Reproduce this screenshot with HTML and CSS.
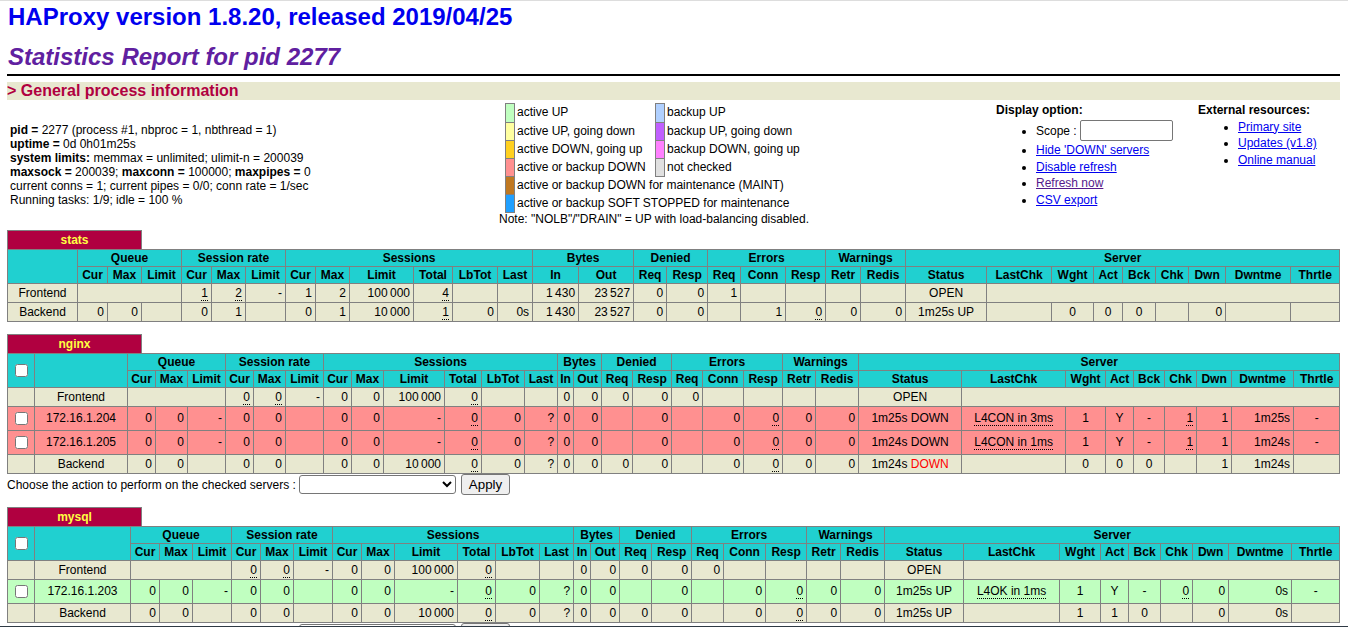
FILE: index.html
```html
<!DOCTYPE html>
<html lang="en">
<head>
<meta charset="utf-8">
<title>Statistics Report for HAProxy</title>
<link rel="stylesheet" href="styles.css">
</head>
<body>
<main class="page">
<h1 class="version">HAProxy version 1.8.20, released 2019/04/25</h1>
<h2 class="report">Statistics Report for pid 2277</h2>
<hr class="rule">
<h3 class="section">&gt; General process information</h3>

<section class="overview">
  <div class="info">
    <div><b>pid = </b>2277 (process #1, nbproc = 1, nbthread = 1)</div>
    <div><b>uptime = </b>0d 0h01m25s</div>
    <div><b>system limits:</b> memmax = unlimited; ulimit-n = 200039</div>
    <div><b>maxsock = </b>200039; <b>maxconn = </b>100000; <b>maxpipes = </b>0</div>
    <div>current conns = 1; current pipes = 0/0; conn rate = 1/sec</div>
    <div>Running tasks: 1/9; idle = 100 %</div>
  </div>
  <div class="legend">
    <div class="legend-grid">
      <span class="sw first s-up"></span><span class="lb">active UP</span><span class="sw first s-bup"></span><span class="lb">backup UP</span>
      <span class="sw s-upgd"></span><span class="lb">active UP, going down</span><span class="sw s-bupgd"></span><span class="lb">backup UP, going down</span>
      <span class="sw s-dngu"></span><span class="lb">active DOWN, going up</span><span class="sw s-bdngu"></span><span class="lb">backup DOWN, going up</span>
      <span class="sw s-dn"></span><span class="lb">active or backup DOWN</span><span class="sw s-nc"></span><span class="lb">not checked</span>
      <span class="sw s-maint"></span><span class="lb wide">active or backup DOWN for maintenance (MAINT)</span>
      <span class="sw s-soft"></span><span class="lb wide">active or backup SOFT STOPPED for maintenance</span>
    </div>
    <div class="note">Note: "NOLB"/"DRAIN" = UP with load-balancing disabled.</div>
  </div>
  <div class="options">
    <b class="opt-title">Display option:</b>
    <ul class="display-list">
      <li class="scope-item">Scope : <input class="scope" type="text"></li>
      <li><a href="#">Hide 'DOWN' servers</a></li>
      <li><a href="#">Disable refresh</a></li>
      <li><a class="visited" href="#">Refresh now</a></li>
      <li><a href="#">CSV export</a></li>
    </ul>
  </div>
  <div class="external">
    <b class="opt-title">External resources:</b>
    <ul class="external-list">
      <li><a href="#">Primary site</a></li>
      <li><a href="#">Updates (v1.8)</a></li>
      <li><a href="#">Online manual</a></li>
    </ul>
  </div>
</section>

<div class="tab">stats</div>
<table class="tbl t-stats">
  <colgroup><col><col><col><col><col><col><col><col><col><col><col><col><col><col><col><col><col><col><col><col><col><col><col><col><col><col><col><col><col><col><col></colgroup>
  <tr class="hr1"><th rowspan="2"></th><th colspan="3">Queue</th><th colspan="3">Session rate</th><th colspan="6">Sessions</th><th colspan="2">Bytes</th><th colspan="2">Denied</th><th colspan="3">Errors</th><th colspan="2">Warnings</th><th colspan="9">Server</th></tr>
  <tr class="hr2"><th>Cur</th><th>Max</th><th>Limit</th><th>Cur</th><th>Max</th><th>Limit</th><th>Cur</th><th>Max</th><th>Limit</th><th>Total</th><th>LbTot</th><th>Last</th><th>In</th><th>Out</th><th>Req</th><th>Resp</th><th>Req</th><th>Conn</th><th>Resp</th><th>Retr</th><th>Redis</th><th>Status</th><th>LastChk</th><th>Wght</th><th>Act</th><th>Bck</th><th>Chk</th><th>Dwn</th><th>Dwntme</th><th>Thrtle</th></tr>
  <tr class="plain"><td class="ac">Frontend</td><td colspan="3"></td><td><u>1</u></td><td><u>2</u></td><td>-</td><td>1</td><td>2</td><td>100 000</td><td><u>4</u></td><td></td><td></td><td>1 430</td><td>23 527</td><td>0</td><td>0</td><td>1</td><td></td><td></td><td></td><td></td><td class="ac">OPEN</td><td colspan="8"></td></tr>
  <tr class="plain"><td class="ac">Backend</td><td>0</td><td>0</td><td></td><td>0</td><td>1</td><td></td><td>0</td><td>1</td><td>10 000</td><td><u>1</u></td><td>0</td><td>0s</td><td>1 430</td><td>23 527</td><td>0</td><td>0</td><td></td><td>1</td><td><u>0</u></td><td>0</td><td>0</td><td class="ac">1m25s UP</td><td></td><td class="ac">0</td><td class="ac">0</td><td class="ac">0</td><td></td><td>0</td><td></td><td></td></tr>
</table>

<div class="tab next">nginx</div>
<table class="tbl t-nginx">
  <colgroup><col><col><col><col><col><col><col><col><col><col><col><col><col><col><col><col><col><col><col><col><col><col><col><col><col><col><col><col><col><col><col><col></colgroup>
  <tr class="hr1"><th rowspan="2"><input class="chk" type="checkbox"></th><th rowspan="2"></th><th colspan="3">Queue</th><th colspan="3">Session rate</th><th colspan="6">Sessions</th><th colspan="2">Bytes</th><th colspan="2">Denied</th><th colspan="3">Errors</th><th colspan="2">Warnings</th><th colspan="9">Server</th></tr>
  <tr class="hr2"><th>Cur</th><th>Max</th><th>Limit</th><th>Cur</th><th>Max</th><th>Limit</th><th>Cur</th><th>Max</th><th>Limit</th><th>Total</th><th>LbTot</th><th>Last</th><th>In</th><th>Out</th><th>Req</th><th>Resp</th><th>Req</th><th>Conn</th><th>Resp</th><th>Retr</th><th>Redis</th><th>Status</th><th>LastChk</th><th>Wght</th><th>Act</th><th>Bck</th><th>Chk</th><th>Dwn</th><th>Dwntme</th><th>Thrtle</th></tr>
  <tr class="plain"><td></td><td class="ac">Frontend</td><td colspan="3"></td><td><u>0</u></td><td><u>0</u></td><td>-</td><td>0</td><td>0</td><td>100 000</td><td><u>0</u></td><td></td><td></td><td>0</td><td>0</td><td>0</td><td>0</td><td>0</td><td></td><td></td><td></td><td></td><td class="ac">OPEN</td><td colspan="8"></td></tr>
  <tr class="server down"><td class="ac"><input class="chk" type="checkbox"></td><td class="ac">172.16.1.204</td><td>0</td><td>0</td><td>-</td><td>0</td><td>0</td><td></td><td>0</td><td>0</td><td>-</td><td><u>0</u></td><td>0</td><td>?</td><td>0</td><td>0</td><td></td><td>0</td><td></td><td>0</td><td><u>0</u></td><td>0</td><td>0</td><td class="ac">1m25s DOWN</td><td class="ac"><u>L4CON in 3ms</u></td><td class="ac">1</td><td class="ac">Y</td><td class="ac">-</td><td><u>1</u></td><td>1</td><td>1m25s</td><td class="ac">-</td></tr>
  <tr class="server down"><td class="ac"><input class="chk" type="checkbox"></td><td class="ac">172.16.1.205</td><td>0</td><td>0</td><td>-</td><td>0</td><td>0</td><td></td><td>0</td><td>0</td><td>-</td><td><u>0</u></td><td>0</td><td>?</td><td>0</td><td>0</td><td></td><td>0</td><td></td><td>0</td><td><u>0</u></td><td>0</td><td>0</td><td class="ac">1m24s DOWN</td><td class="ac"><u>L4CON in 1ms</u></td><td class="ac">1</td><td class="ac">Y</td><td class="ac">-</td><td><u>1</u></td><td>1</td><td>1m24s</td><td class="ac">-</td></tr>
  <tr class="plain"><td></td><td class="ac">Backend</td><td>0</td><td>0</td><td></td><td>0</td><td>0</td><td></td><td>0</td><td>0</td><td>10 000</td><td><u>0</u></td><td>0</td><td>?</td><td>0</td><td>0</td><td>0</td><td>0</td><td></td><td>0</td><td><u>0</u></td><td>0</td><td>0</td><td class="ac">1m24s <span class="red">DOWN</span></td><td></td><td class="ac">0</td><td class="ac">0</td><td class="ac">0</td><td></td><td>1</td><td>1m24s</td><td></td></tr>
</table>
<form class="actions">
  <span class="act-label">Choose the action to perform on the checked servers :</span>
  <select class="act-select"><option></option></select>
  <button class="act-apply" type="button">Apply</button>
</form>

<div class="tab next-form">mysql</div>
<table class="tbl t-mysql">
  <colgroup><col><col><col><col><col><col><col><col><col><col><col><col><col><col><col><col><col><col><col><col><col><col><col><col><col><col><col><col><col><col><col><col></colgroup>
  <tr class="hr1"><th rowspan="2"><input class="chk" type="checkbox"></th><th rowspan="2"></th><th colspan="3">Queue</th><th colspan="3">Session rate</th><th colspan="6">Sessions</th><th colspan="2">Bytes</th><th colspan="2">Denied</th><th colspan="3">Errors</th><th colspan="2">Warnings</th><th colspan="9">Server</th></tr>
  <tr class="hr2"><th>Cur</th><th>Max</th><th>Limit</th><th>Cur</th><th>Max</th><th>Limit</th><th>Cur</th><th>Max</th><th>Limit</th><th>Total</th><th>LbTot</th><th>Last</th><th>In</th><th>Out</th><th>Req</th><th>Resp</th><th>Req</th><th>Conn</th><th>Resp</th><th>Retr</th><th>Redis</th><th>Status</th><th>LastChk</th><th>Wght</th><th>Act</th><th>Bck</th><th>Chk</th><th>Dwn</th><th>Dwntme</th><th>Thrtle</th></tr>
  <tr class="plain"><td></td><td class="ac">Frontend</td><td colspan="3"></td><td><u>0</u></td><td><u>0</u></td><td>-</td><td>0</td><td>0</td><td>100 000</td><td><u>0</u></td><td></td><td></td><td>0</td><td>0</td><td>0</td><td>0</td><td>0</td><td></td><td></td><td></td><td></td><td class="ac">OPEN</td><td colspan="8"></td></tr>
  <tr class="server up"><td class="ac"><input class="chk" type="checkbox"></td><td class="ac">172.16.1.203</td><td>0</td><td>0</td><td>-</td><td>0</td><td>0</td><td></td><td>0</td><td>0</td><td>-</td><td><u>0</u></td><td>0</td><td>?</td><td>0</td><td>0</td><td></td><td>0</td><td></td><td>0</td><td><u>0</u></td><td>0</td><td>0</td><td class="ac">1m25s UP</td><td class="ac"><u>L4OK in 1ms</u></td><td class="ac">1</td><td class="ac">Y</td><td class="ac">-</td><td><u>0</u></td><td>0</td><td>0s</td><td class="ac">-</td></tr>
  <tr class="plain"><td></td><td class="ac">Backend</td><td>0</td><td>0</td><td></td><td>0</td><td>0</td><td></td><td>0</td><td>0</td><td>10 000</td><td><u>0</u></td><td>0</td><td>?</td><td>0</td><td>0</td><td>0</td><td>0</td><td></td><td>0</td><td><u>0</u></td><td>0</td><td>0</td><td class="ac">1m25s UP</td><td></td><td class="ac">1</td><td class="ac">1</td><td class="ac">0</td><td></td><td>0</td><td>0s</td><td></td></tr>
</table>
<form class="actions">
  <span class="act-label"></span>
  <select class="act-select" aria-label="Action"><option></option></select>
  <button class="act-apply" type="button" aria-label="Apply"></button>
</form>
</main>
<div class="edge"></div>
</body>
</html>
```
FILE: styles.css
```css
html, body { height: 100%; overflow: hidden; }
body {
  margin: 0;
  border-top: 1px solid #dddddd;
  box-sizing: border-box;
  background: #ffffff;
  color: #000000;
  font-family: "Liberation Sans", Arial, sans-serif;
  font-size: 12px;
}
.page { width: 1333px; padding-left: 7px; }
.version { margin: 2px 0 12px 1px; font-size: 24px; line-height: 28px; font-weight: bold; color: #0000ee; }
.report { margin: 0 0 0 1px; font-size: 24px; line-height: 28px; font-weight: bold; font-style: italic; color: #6020a0; }
.rule { margin: 3px 0 6px; height: 2px; border: 0; background: #000000; }
.section { margin: 0; height: 18px; font-size: 16px; line-height: 18px; font-weight: bold; color: #b00040; background: #e8e8d0; }

.overview { display: flex; height: 130px; line-height: 14px; }
.info { width: 489px; padding: 23px 0 0 3px; }
.legend { width: 497px; padding-top: 3px; }
.legend-grid {
  display: grid;
  grid-template-columns: 10px 140px 10px 1fr;
  grid-template-rows: 19px repeat(5, 18px);
  padding-left: 6px;
}
.sw { border: 1px solid #808080; margin-bottom: -1px; }
.lb { padding-left: 2px; line-height: 18px; white-space: nowrap; }
.wide { grid-column: 2 / 5; }
.s-up { background: #c0ffc0; }
.s-upgd { background: #ffffa0; }
.s-dngu { background: #ffd020; }
.s-dn { background: #ff9090; }
.s-maint { background: #c07820; }
.s-soft { background: #20a0ff; }
.s-bup { background: #b0d0ff; }
.s-bupgd { background: #c060ff; }
.s-bdngu { background: #ff80ff; }
.s-nc { background: #e0e0e0; }
.note { white-space: nowrap; }

.options { width: 202px; padding-top: 3px; }
.external { padding-top: 3px; }
.opt-title { display: block; }
.display-list, .external-list { margin: 0; padding: 0 0 0 40px; line-height: 16.5px; }
.display-list { margin-top: 3px; }
.external-list { margin-top: 1.5px; }
.scope-item { height: 22px; line-height: 22px; }
.scope {
  box-sizing: border-box;
  width: 93px;
  height: 21px;
  margin: 0;
  padding: 1px 2px;
  border: 1px solid #767676;
  border-radius: 2px;
  vertical-align: top;
}
a { color: #0000ee; }
a.visited { color: #551a8b; }

.tab {
  box-sizing: border-box;
  width: 135px;
  height: 19px;
  border: 1px solid #808080;
  border-bottom: 0;
  background: #b00040;
  color: #ffff40;
  font-weight: bold;
  line-height: 18px;
  text-align: center;
}
.next { margin-top: 12px; }
.next-form { margin-top: 12px; }

.tbl { width: 1333px; border-collapse: collapse; table-layout: fixed; }
.tbl th, .tbl td {
  border: 1px solid #808080;
  padding: 0 3px;
  font-size: 12px;
  white-space: nowrap;
  overflow: hidden;
}
.tbl th { padding: 0; background: #20d0d0; font-weight: bold; text-align: center; }
.tbl td { text-align: right; word-spacing: -1px; }
.tbl td.ac { text-align: center; word-spacing: 0; }
.hr1, .hr2 { height: 17px; }
.plain { height: 19px; background: #e8e8d0; }
.server { height: 24px; }
.tbl .server td:not(:first-child) { padding-bottom: 2px; }
.down { background: #ff9090; }
.up { background: #c0ffc0; }
.red { color: #ff0000; }
u { text-decoration: none; border-bottom: 1px dotted #000000; }
.chk { display: block; width: 13px; height: 13px; margin: 0 auto; }

.actions { display: flex; align-items: center; height: 21px; }
.act-label { width: 292px; white-space: nowrap; }
.act-select {
  box-sizing: border-box;
  width: 157px;
  height: 19px;
  margin: 0 5px 0 0;
  padding: 0;
  border: 1px solid #767676;
  border-radius: 3px;
  background: #ffffff;
  font-family: "Liberation Sans", Arial, sans-serif;
  font-size: 13.33px;
}
.act-apply {
  box-sizing: border-box;
  width: 49px;
  height: 21px;
  margin: 0;
  padding: 0;
  border: 1px solid #767676;
  border-radius: 3px;
  background: #efefef;
  color: #000000;
  font-family: "Liberation Sans", Arial, sans-serif;
  font-size: 13.33px;
}
.edge { position: fixed; left: 0; right: 0; bottom: 0; height: 1px; background: #2f3a45; }

.t-stats col:nth-child(1) { width: 70px; }
.t-stats col:nth-child(2) { width: 30px; }
.t-stats col:nth-child(3) { width: 34px; }
.t-stats col:nth-child(4) { width: 40px; }
.t-stats col:nth-child(5) { width: 30px; }
.t-stats col:nth-child(6) { width: 34px; }
.t-stats col:nth-child(7) { width: 40px; }
.t-stats col:nth-child(8) { width: 30px; }
.t-stats col:nth-child(9) { width: 34px; }
.t-stats col:nth-child(10) { width: 64px; }
.t-stats col:nth-child(11) { width: 39px; }
.t-stats col:nth-child(12) { width: 45px; }
.t-stats col:nth-child(13) { width: 35px; }
.t-stats col:nth-child(14) { width: 46px; }
.t-stats col:nth-child(15) { width: 55px; }
.t-stats col:nth-child(16) { width: 33px; }
.t-stats col:nth-child(17) { width: 41px; }
.t-stats col:nth-child(18) { width: 33px; }
.t-stats col:nth-child(19) { width: 45px; }
.t-stats col:nth-child(20) { width: 40px; }
.t-stats col:nth-child(21) { width: 35px; }
.t-stats col:nth-child(22) { width: 45px; }
.t-stats col:nth-child(23) { width: 81px; }
.t-stats col:nth-child(24) { width: 65px; }
.t-stats col:nth-child(25) { width: 42px; }
.t-stats col:nth-child(26) { width: 29px; }
.t-stats col:nth-child(27) { width: 33px; }
.t-stats col:nth-child(28) { width: 33px; }
.t-stats col:nth-child(29) { width: 37px; }
.t-stats col:nth-child(30) { width: 65px; }
.t-stats col:nth-child(31) { width: 49px; }

.t-nginx col:nth-child(1) { width: 27px; }
.t-nginx col:nth-child(2) { width: 93px; }
.t-nginx col:nth-child(3) { width: 28px; }
.t-nginx col:nth-child(4) { width: 32px; }
.t-nginx col:nth-child(5) { width: 38px; }
.t-nginx col:nth-child(6) { width: 28px; }
.t-nginx col:nth-child(7) { width: 32px; }
.t-nginx col:nth-child(8) { width: 38px; }
.t-nginx col:nth-child(9) { width: 28px; }
.t-nginx col:nth-child(10) { width: 32px; }
.t-nginx col:nth-child(11) { width: 61px; }
.t-nginx col:nth-child(12) { width: 37px; }
.t-nginx col:nth-child(13) { width: 43px; }
.t-nginx col:nth-child(14) { width: 33px; }
.t-nginx col:nth-child(15) { width: 16px; }
.t-nginx col:nth-child(16) { width: 28px; }
.t-nginx col:nth-child(17) { width: 31px; }
.t-nginx col:nth-child(18) { width: 39px; }
.t-nginx col:nth-child(19) { width: 31px; }
.t-nginx col:nth-child(20) { width: 41px; }
.t-nginx col:nth-child(21) { width: 39px; }
.t-nginx col:nth-child(22) { width: 33px; }
.t-nginx col:nth-child(23) { width: 43px; }
.t-nginx col:nth-child(24) { width: 103px; }
.t-nginx col:nth-child(25) { width: 104px; }
.t-nginx col:nth-child(26) { width: 40px; }
.t-nginx col:nth-child(27) { width: 28px; }
.t-nginx col:nth-child(28) { width: 31px; }
.t-nginx col:nth-child(29) { width: 32px; }
.t-nginx col:nth-child(30) { width: 35px; }
.t-nginx col:nth-child(31) { width: 62px; }
.t-nginx col:nth-child(32) { width: 46px; }

.t-mysql col:nth-child(1) { width: 27px; }
.t-mysql col:nth-child(2) { width: 96px; }
.t-mysql col:nth-child(3) { width: 29px; }
.t-mysql col:nth-child(4) { width: 33px; }
.t-mysql col:nth-child(5) { width: 39px; }
.t-mysql col:nth-child(6) { width: 29px; }
.t-mysql col:nth-child(7) { width: 33px; }
.t-mysql col:nth-child(8) { width: 39px; }
.t-mysql col:nth-child(9) { width: 29px; }
.t-mysql col:nth-child(10) { width: 33px; }
.t-mysql col:nth-child(11) { width: 63px; }
.t-mysql col:nth-child(12) { width: 38px; }
.t-mysql col:nth-child(13) { width: 44px; }
.t-mysql col:nth-child(14) { width: 34px; }
.t-mysql col:nth-child(15) { width: 17px; }
.t-mysql col:nth-child(16) { width: 29px; }
.t-mysql col:nth-child(17) { width: 32px; }
.t-mysql col:nth-child(18) { width: 40px; }
.t-mysql col:nth-child(19) { width: 32px; }
.t-mysql col:nth-child(20) { width: 42px; }
.t-mysql col:nth-child(21) { width: 41px; }
.t-mysql col:nth-child(22) { width: 34px; }
.t-mysql col:nth-child(23) { width: 44px; }
.t-mysql col:nth-child(24) { width: 79px; }
.t-mysql col:nth-child(25) { width: 96px; }
.t-mysql col:nth-child(26) { width: 41px; }
.t-mysql col:nth-child(27) { width: 28px; }
.t-mysql col:nth-child(28) { width: 32px; }
.t-mysql col:nth-child(29) { width: 32px; }
.t-mysql col:nth-child(30) { width: 36px; }
.t-mysql col:nth-child(31) { width: 63px; }
.t-mysql col:nth-child(32) { width: 48px; }
```
